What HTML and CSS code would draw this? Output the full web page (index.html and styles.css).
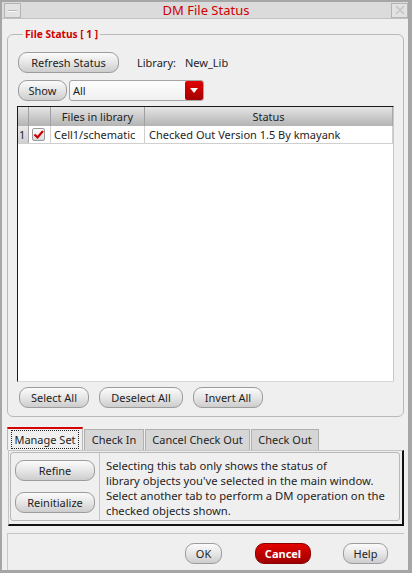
FILE: index.html
```html
<!DOCTYPE html>
<html>
<head>
<meta charset="utf-8">
<link rel="stylesheet" href="styles.css">
</head>
<body>
<div class="window">
  <div class="titlebar">
    <span class="tb-btn"><span class="dash"></span></span>
    <span class="title">DM File Status</span>
    <span class="tb-btn">
      <svg width="14" height="12" viewBox="0 0 14 12"><path d="M3 2 L7 6 L3 10 M11 2 L7 6 L11 10" fill="none" stroke="#c4c4c4" stroke-width="1.5"/></svg>
    </span>
  </div>
  <div class="content">
    <fieldset class="group">
      <legend>File Status [ 1 ]</legend>
      <div class="row1">
        <button class="btn refresh">Refresh Status</button>
        <span class="lib-label">Library:</span>
        <span class="lib-name">New_Lib</span>
      </div>
      <div class="row2">
        <button class="btn show">Show</button>
        <div class="combo">
          <span class="combo-text">All</span>
          <span class="combo-drop"><svg width="8" height="5" viewBox="0 0 8 5"><path d="M0 0 L8 0 L4 5 Z" fill="#fff"/></svg></span>
        </div>
      </div>
      <div class="table">
        <div class="thead">
          <div class="th c-num"></div>
          <div class="th c-chk"></div>
          <div class="th c-file">Files in library</div>
          <div class="th c-status">Status</div>
        </div>
        <div class="tr">
          <div class="td c-num rowhead">1</div>
          <div class="td c-chk">
            <svg width="13" height="13" viewBox="0 0 13 13"><defs><linearGradient id="cb" x1="0" y1="0" x2="0" y2="1"><stop offset="0" stop-color="#ffffff"/><stop offset="1" stop-color="#d8d8d8"/></linearGradient></defs><rect x="0.5" y="0.5" width="12" height="12" rx="1.5" fill="url(#cb)" stroke="#9a9a9a"/><path d="M2.5 6.5 L5.5 9.5 L11 3" fill="none" stroke="#cc0000" stroke-width="2.2"/></svg>
          </div>
          <div class="td c-file">Cell1/schematic</div>
          <div class="td c-status">Checked Out Version 1.5 By kmayank</div>
        </div>
      </div>
      <div class="btnrow">
        <button class="btn sel">Select All</button>
        <button class="btn desel">Deselect All</button>
        <button class="btn inv">Invert All</button>
      </div>
    </fieldset>
    <div class="tabs">
      <div class="tab active"><span class="focus">Manage Set</span></div>
      <div class="tab t2">Check In</div>
      <div class="tab t3">Cancel Check Out</div>
      <div class="tab t4">Check Out</div>
    </div>
    <div class="panel">
      <div class="panel-inner">
        <div class="panel-btns">
          <button class="btn pbtn">Refine</button>
          <button class="btn pbtn">Reinitialize</button>
        </div>
        <div class="panel-text">Selecting this tab only shows the status of<br>library objects you've selected in the main window.<br>Select another tab to perform a DM operation on the<br>checked objects shown.</div>
      </div>
    </div>
    <div class="footer">
      <button class="btn ok">OK</button>
      <button class="btn cancel">Cancel</button>
      <button class="btn help">Help</button>
    </div>
  </div>
</div>
</body>
</html>
```
FILE: styles.css
```css
* { box-sizing: border-box; }
html, body { margin: 0; padding: 0; }
body {
  width: 412px;
  height: 573px;
  overflow: hidden;
  font-family: "Noto Sans", "DejaVu Sans", sans-serif;
  font-size: 11px;
  color: #1e1e1e;
  background: #efefef;
}
.window {
  width: 412px;
  height: 573px;
  border-top: 2px solid #a6a6a6;
  border-left: 2px solid #a6a6a6;
  border-right: 4px solid #a6a6a6;
  border-bottom: 3px solid #a6a6a6;
  background: #efefef;
  display: flex;
  flex-direction: column;
}
.titlebar {
  height: 17px;
  background: #dbdbdb;
  border-bottom: 1px solid #c2c2c2;
  display: flex;
  align-items: center;
  justify-content: space-between;
  padding: 0 0 0 2px;
}
.tb-btn {
  width: 17px;
  height: 15px;
  border: 1px solid #b4b4b4;
  background: #e2e2e2;
  display: flex;
  align-items: center;
  justify-content: center;
}
.dash {
  width: 9px;
  height: 2px;
  border-top: 1px solid #b8b8b8;
  border-bottom: 1px solid #fafafa;
  margin-top: 2px;
}
.title {
  color: #d00000;
  font-size: 13px;
  line-height: 15px;
}
.content {
  flex: 1;
  display: flex;
  flex-direction: column;
}
.group {
  margin: 8px 4px 0 5px;
  padding: 11px 9px 8px 9px;
  border: 1px solid #b9b9b9;
  border-radius: 6px;
  min-width: 0;
}
.group legend {
  color: #d00000;
  font-weight: bold;
  font-size: 10.2px;
  padding: 0 2px;
  margin-left: 6px;
  line-height: 14px;
}
.btn {
  font-family: "Noto Sans", "DejaVu Sans", sans-serif;
  font-size: 11px;
  color: #1e1e1e;
  height: 21px;
  border: 1px solid #9c9c9c;
  border-radius: 9px;
  background: linear-gradient(#fbfbfb, #e6e6e6 50%, #cdcdcd);
  padding: 0;
  margin: 0;
  line-height: 19px;
  text-align: center;
}
.row1 {
  display: flex;
  align-items: center;
  height: 21px;
  margin-left: 1px;
}
.refresh { width: 101px; }
.lib-label { margin-left: 18px; }
.lib-name { margin-left: 9px; }
.row2 {
  display: flex;
  align-items: center;
  height: 21px;
  margin-top: 7px;
  margin-left: 1px;
}
.show { width: 49px; }
.combo {
  margin-left: 2px;
  width: 135px;
  height: 21px;
  border: 1px solid #a4a4a4;
  border-radius: 3px;
  background: linear-gradient(#fdfdfd, #f0f0f0);
  display: flex;
  align-items: center;
  justify-content: space-between;
  padding: 0 0 0 3px;
}
.combo-drop {
  width: 18px;
  height: 19px;
  border-radius: 2px;
  background: linear-gradient(#e00000, #a40000);
  display: flex;
  align-items: center;
  justify-content: center;
}
.table {
  margin-top: 5px;
  height: 276px;
  background: #fff;
  border-top: 1px solid #1a1a1a;
  border-left: 1px solid #1a1a1a;
  border-right: 1px solid #c8c8c8;
  border-bottom: 1px solid #d8d8d8;
  display: flex;
  flex-direction: column;
}
.thead {
  display: flex;
  height: 19px;
  background: linear-gradient(#e4e4e4, #b4b4b4);
  border-right: 1px solid #a8a8a8;
}
.th {
  border-right: 1px solid #a0a0a0;
  text-align: center;
  line-height: 19px;
}
.th.c-status { border-right: none; }
.c-num { width: 11px; }
.c-chk { width: 22px; }
.c-file { width: 94px; }
.c-status { flex: 1; }
.tr {
  display: flex;
  height: 18px;
  border-bottom: 1px solid #cfcfcf;
  border-right: 1px solid #cfcfcf;
}
.td {
  line-height: 17px;
  border-right: 1px solid #d0d0d0;
  white-space: nowrap;
}
.td.c-status { border-right: none; padding-left: 4px; }
.td.c-file { padding-left: 3px; }
.rowhead {
  background: linear-gradient(#eaeaea, #cfcfcf);
  padding-left: 1px;
  border-right: 1px solid #a8a8a8;
}
.td.c-chk {
  display: flex;
  align-items: center;
  justify-content: center;
  padding-right: 2px;
}
.btnrow {
  display: flex;
  gap: 10px;
  margin-top: 5px;
  margin-left: 2px;
}
.sel { width: 70px; }
.desel { width: 84px; }
.inv { width: 70px; }
.tabs {
  display: flex;
  margin: 10px 0 0 5px;
  height: 23px;
  align-items: flex-end;
}
.tab {
  height: 21px;
  background: #d6d6d6;
  border: 1px solid #b0b0b0;
  border-bottom: none;
  line-height: 19px;
  text-align: center;
  margin-right: 1px;
}
.tab.active {
  height: 23px;
  width: 76px;
  background: #efefef;
  border-top: 2px solid #d40000;
  border-left: 1px solid #b8b8b8;
  border-right: 1px solid #b8b8b8;
  padding: 1px 3px 0 3px;
}
.focus {
  display: block;
  border: 1px dotted #222;
  line-height: 17px;
  height: 19px;
}
.t2 { width: 60px; }
.t3 { width: 105px; }
.t4 { width: 68px; }
.panel {
  margin: 0 4px 0 6px;
  height: 76px;
  flex-shrink: 0;
  border-top: 1px solid #c4c4c4;
  border-left: 1px solid #c4c4c4;
  border-right: 2px solid #111;
  border-bottom: 2px solid #111;
  padding: 1px 2px 3px 1px;
}
.panel-inner {
  height: 100%;
  border: 1px solid #b8b8b8;
  border-radius: 3px;
  display: flex;
}
.panel-btns {
  width: 89px;
  display: flex;
  flex-direction: column;
  gap: 11px;
  padding: 7px 0 0 4px;
  border-right: 1px solid #c4c4c4;
  margin: 0;
}
.pbtn { width: 80px; }
.panel-text {
  padding: 5px 0 0 6px;
  font-size: 11.25px;
  line-height: 15px;
  white-space: nowrap;
}
.footer {
  flex: 1;
  margin-left: 5px;
  margin-right: 4px;
  margin-top: 7px;
  border-top: 1px solid #c4c4c4;
  border-left: 1px solid #c8c8c8;
  display: flex;
  align-items: flex-start;
  padding-top: 9px;
  padding-left: 177px;
}
.ok { width: 37px; }
.cancel {
  width: 56px;
  margin-left: 33px;
  background: linear-gradient(#e20000, #c00000 50%, #a00000);
  border-color: #8a0000;
  color: #fff;
  font-weight: bold;
}
.help { width: 45px; margin-left: 32px; }
```
